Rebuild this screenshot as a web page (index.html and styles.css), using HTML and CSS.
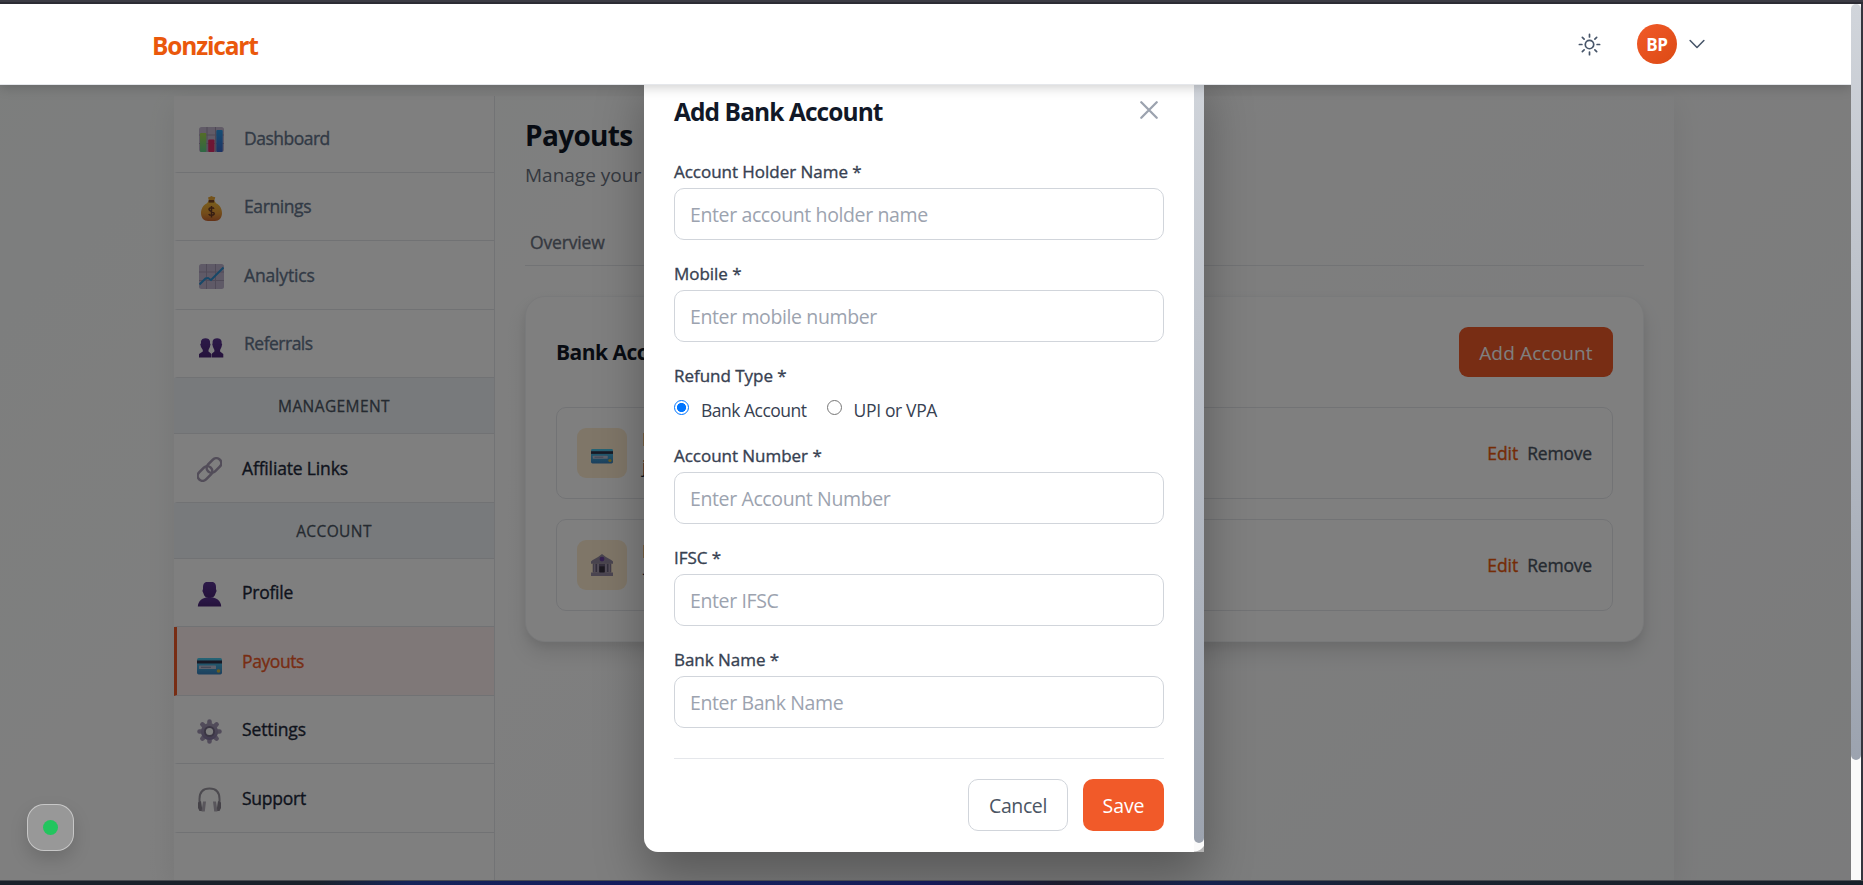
FILE: index.html
```html
<!DOCTYPE html>
<html lang="en">
<head>
<meta charset="utf-8">
<title>Bonzicart - Payouts</title>
<link rel="stylesheet" href="styles.css">
</head>
<body>
<div class="frame">
  <div class="frame-top"></div>
  <div class="viewport">
    <div class="page">
      <header class="topbar">
        <a class="brand"><span class="t">Bonzicart</span></a>
        <div class="topbar-actions">
          <svg class="sun" viewBox="0 0 24 24"><path d="M12 3v2.25m6.364.386-1.591 1.591M21 12h-2.25m-.386 6.364-1.591-1.591M12 18.75V21m-4.773-4.227-1.591 1.591M5.25 12H3m4.227-4.773L5.636 5.636M15.750 12a3.750 3.750 0 1 1-7.500 0 3.750 3.750 0 0 1 7.500 0Z"/></svg>
          <span class="avatar"><span class="t">BP</span></span>
          <svg class="chevron" viewBox="0 0 24 24"><path d="m19.500 8.250-7.500 7.500-7.500-7.500"/></svg>
        </div>
      </header>

      <div class="body">
        <div class="shell">
          <nav class="sidebar">
            <a class="nav-item muted first">
              <svg class="emoji" viewBox="0 0 25 25"><use href="#e-bars"/></svg><span class="t n1">Dashboard</span></a>
            <a class="nav-item muted">
              <svg class="emoji" viewBox="0 0 25 25"><use href="#e-bag"/></svg><span class="t n2">Earnings</span></a>
            <a class="nav-item muted tall">
              <svg class="emoji" viewBox="0 0 25 25"><use href="#e-trend"/></svg><span class="t n3">Analytics</span></a>
            <a class="nav-item muted">
              <svg class="emoji" viewBox="0 0 25 25"><use href="#e-people"/></svg><span class="t n4">Referrals</span></a>
            <div class="nav-head"><span class="t">MANAGEMENT</span></div>
            <a class="nav-item tall">
              <svg class="emoji" viewBox="0 0 25 25"><use href="#e-link"/></svg><span class="t n5">Affiliate Links</span></a>
            <div class="nav-head"><span class="t">ACCOUNT</span></div>
            <a class="nav-item">
              <svg class="emoji" viewBox="0 0 25 25"><use href="#e-person"/></svg><span class="t n6">Profile</span></a>
            <a class="nav-item tall active">
              <svg class="emoji" viewBox="0 0 25 25"><use href="#e-card"/></svg><span class="t n7">Payouts</span></a>
            <a class="nav-item">
              <svg class="emoji" viewBox="0 0 25 25"><use href="#e-gear"/></svg><span class="t n8">Settings</span></a>
            <a class="nav-item tall">
              <svg class="emoji" viewBox="0 0 25 25"><use href="#e-phones"/></svg><span class="t n9">Support</span></a>
          </nav>

          <main class="content">
            <h1 class="title"><span class="t">Payouts</span></h1>
            <p class="subtitle"><span class="t">Manage your</span></p>
            <div class="tabs"><span class="t">Overview</span></div>
            <section class="card">
              <div class="card-head">
                <h2 class="card-title"><span class="t">Bank Accounts</span></h2>
                <button class="add"><span class="t">Add Account</span></button>
              </div>
              <div class="account">
                <span class="tile"><svg class="tile-icon" viewBox="0 0 25 25"><use href="#e-card"/></svg></span>
                <div class="account-text"><b>B</b><i>j</i></div>
                <div class="account-actions"><a class="edit"><span class="t">Edit</span></a><a class="remove"><span class="t">Remove</span></a></div>
              </div>
              <div class="account">
                <span class="tile"><svg class="tile-icon" viewBox="0 0 25 25"><use href="#e-bank"/></svg></span>
                <div class="account-text"><b>B</b><i>*</i></div>
                <div class="account-actions"><a class="edit"><span class="t">Edit</span></a><a class="remove"><span class="t">Remove</span></a></div>
              </div>
            </section>
          </main>
        </div>
      </div>

      <div class="overlay">
        <div class="modal">
          <form class="modal-body">
            <div class="modal-head">
              <h3 class="modal-title"><span class="t">Add Bank Account</span></h3>
              <svg class="close" viewBox="0 0 18 18"><path d="M1.300 1.300 16.700 16.700M16.700 1.300 1.300 16.700"/></svg>
            </div>
            <div class="field"><label><span class="t">Account Holder Name *</span></label><div class="input"><span class="t">Enter account holder name</span></div></div>
            <div class="field"><label><span class="t">Mobile *</span></label><div class="input"><span class="t">Enter mobile number</span></div></div>
            <div class="field"><label><span class="t">Refund Type *</span></label>
              <div class="radios">
                <span class="radio on"></span><span class="t r1">Bank Account</span>
                <span class="radio second"></span><span class="t r2">UPI or VPA</span>
              </div>
            </div>
            <div class="field"><label><span class="t">Account Number *</span></label><div class="input"><span class="t">Enter Account Number</span></div></div>
            <div class="field"><label><span class="t">IFSC *</span></label><div class="input"><span class="t">Enter IFSC</span></div></div>
            <div class="field"><label><span class="t">Bank Name *</span></label><div class="input"><span class="t">Enter Bank Name</span></div></div>
            <div class="modal-foot">
              <button type="button" class="btn cancel"><span class="t">Cancel</span></button>
              <button type="button" class="btn save"><span class="t">Save</span></button>
            </div>
          </form>
          <div class="modal-scroll"><div class="modal-thumb"></div></div>
        </div>
      </div>
      <div class="status"><span class="status-dot"></span></div>
    </div>
    <div class="scrollbar"><div class="thumb"></div></div>
    <div class="edge"></div>
  </div>
  <div class="frame-bottom"></div>
</div>

<svg class="defs" width="0" height="0">
  <defs>
    <linearGradient id="g-green" x1="0" y1="0" x2="0" y2="1"><stop offset="0" stop-color="#a8d94e"/><stop offset="1" stop-color="#5cd08a"/></linearGradient>
    <linearGradient id="g-blue" x1="0" y1="0" x2="0" y2="1"><stop offset="0" stop-color="#2b9be8"/><stop offset="1" stop-color="#3a66c8"/></linearGradient>
    <linearGradient id="g-bag" x1="0" y1="0" x2="0" y2="1"><stop offset="0" stop-color="#f4bd3a"/><stop offset=".6" stop-color="#e89a34"/><stop offset="1" stop-color="#c9652f"/></linearGradient>
    <linearGradient id="g-purple" x1="0" y1="0" x2="0" y2="1"><stop offset="0" stop-color="#5a3492"/><stop offset="1" stop-color="#4a2577"/></linearGradient>
    <linearGradient id="g-card" x1="0" y1="0" x2="0" y2="1"><stop offset="0" stop-color="#4cc8ea"/><stop offset="1" stop-color="#3a80bc"/></linearGradient>
    <linearGradient id="g-gear" x1="0" y1="0" x2="0" y2="1"><stop offset="0" stop-color="#a79db6"/><stop offset="1" stop-color="#8274a0"/></linearGradient>
    <symbol id="e-bars" viewBox="0 0 25 25">
      <rect width="25" height="25" rx="2.500" fill="#c3b7cf"/>
      <path d="M8 0v25M16.500 0v25M0 8h25M0 16.500h25" stroke="#9d91ab" stroke-width="1"/>
      <rect x="1" y="6" width="6.300" height="19" rx="1" fill="url(#g-green)"/>
      <rect x="9.200" y="12.500" width="6.300" height="12.500" rx="1" fill="#dc2c69"/>
      <rect x="17.300" y="3" width="6.400" height="22" rx="1" fill="url(#g-blue)"/>
    </symbol>
    <symbol id="e-bag" viewBox="0 0 25 25">
      <path d="M9 1.500 11 .8l1.500-.8 1.500.8 2.300.5-1.200 4h-5z" fill="#e8a636"/>
      <path d="M9.500 5h6l1.600 2.200C21 9 23 13 23 17c0 5-3 8-7 8H9c-4 0-7-3-7-8 0-4 2-8 6-9.800z" fill="url(#g-bag)"/>
      <rect x="9.600" y="4" width="5.600" height="2.600" fill="#7d4420"/>
      <path d="M15 12.800c-.6-1.300-5-1.600-5 .7 0 2.500 5.200 1.400 5.200 4.100 0 2.400-4.800 2.200-5.400.3M12.500 10v11.500" fill="none" stroke="#6b3a24" stroke-width="1.500"/>
    </symbol>
    <symbol id="e-trend" viewBox="0 0 25 25">
      <rect width="25" height="25" rx="2.500" fill="#bfb4ce"/>
      <path d="M7.500 0v25M16.500 0v25M0 8h25M0 16.500h25" stroke="#a196b1" stroke-width="1"/>
      <path d="m.5 20.500 6-6 2.500-.5 3 2L24.500 3.500" fill="none" stroke="#2f90d0" stroke-width="2"/>
    </symbol>
    <symbol id="e-people" viewBox="0 0 25 25">
      <g transform="translate(0 1.500)" fill="url(#g-purple)">
        <path d="M2 7c0-4.500 9-4.500 9 0v2l.6.500-.7 3-1.400 3v1.500l3 2.500V23H0v-3.500L3.800 17v-1.500L2 12.500 1.200 9.500 2 9z"/>
        <path d="M13.600 7c0-4.500 9-4.500 9 0v2l.6.500-.7 3-1.400 3V17l3.200 2.500V23H13v-4l2.400-2v-1.500l-1.400-3-.8-3 .4-.5z"/>
      </g>
    </symbol>
    <symbol id="e-link" viewBox="0 0 25 25">
      <g fill="none" stroke="#a59ab2" stroke-width="2.600"><rect x="8.700" y="3.600" width="16.500" height="9.800" rx="4.900" transform="rotate(-45 17 8.500)"/><rect x="-.3" y="11.600" width="16.500" height="9.800" rx="4.900" transform="rotate(-45 8 16.500)"/></g>
    </symbol>
    <symbol id="e-person" viewBox="0 0 25 25">
      <path d="M9 0h7q3 1 3 5v2l.6 2-.9 2c-1 4-3 5-6.200 5s-5.200-1-6.200-5L5.400 9 6 7V5q0-4 3-5z" fill="url(#g-purple)"/>
      <path d="M.8 24.500C1 19 5 16.500 9 15.500h7c4 1 8 3.500 8.200 9z" fill="url(#g-purple)"/>
    </symbol>
    <symbol id="e-card" viewBox="0 0 25 25">
      <rect y="8" width="25" height="16.500" rx="1.700" fill="url(#g-card)"/>
      <rect y="10.500" width="25" height="3" fill="#33334a"/>
      <rect x="2" y="15.500" width="17" height="3.600" rx=".6" fill="#bcc2d8"/><path d="M4 17.300h10" stroke="#7f86a5" stroke-width="1"/>
      <circle cx="21.500" cy="21" r="1.800" fill="#d0b840"/>
    </symbol>
    <symbol id="e-gear" viewBox="0 0 25 25">
      <g stroke="#a397b5" stroke-width="4.600" stroke-linecap="round"><path d="M12.500 2.500v20M2.500 12.500h20M5.400 5.400l14.200 14.200M19.600 5.400 5.400 19.600"/></g>
      <circle cx="12.500" cy="12.500" r="8.600" fill="url(#g-gear)"/><circle cx="12.500" cy="12.500" r="5.500" fill="#766c88"/><circle cx="12.500" cy="12.500" r="3.600" fill="#fff"/>
    </symbol>
    <symbol id="e-phones" viewBox="0 0 25 25">
      <path d="M2.500 16v-4C2.500 4.500 7 1.500 12.500 1.500s10 3 10 10.500v4" fill="none" stroke="#9a96a0" stroke-width="2"/>
      <path d="M1 15.500 4 14l1.500 10H2.500L1 21zM24 15.500 21 14l-1.500 10h3L24 21z" fill="#8a8590"/>
      <path d="M6 14.500h3L7.800 24.500H4.500zM19 14.500h-3l1.200 10h3.300z" fill="#b2adb8"/>
    </symbol>
    <symbol id="e-bank" viewBox="0 0 25 25">
      <path d="M12.500 0 17 3.500 23.500 7 25 8.500V11H0V8.500L1.500 7 8 3.500z" fill="#93889f"/>
      <path d="M2 11h21v10H2z" fill="#695f79"/><path d="M4 11v10M8 11v10M17 11v10M21 11v10" stroke="#a69bb1" stroke-width="2.200"/>
      <path d="M9.500 14h6v8h-6z" fill="#37303f"/><circle cx="12.500" cy="5.800" r="2.800" fill="#6a43a0"/>
      <path d="M0 21h25v4H0z" fill="#968aa3"/>
    </symbol>
  </defs>
</svg>
</body>
</html>
```
FILE: styles.css
```css
* { box-sizing: border-box; }
html, body { margin: 0; height: 100%; overflow: hidden; }
body { font-family: "Open Sans", "Noto Sans", sans-serif; color: #1e293b; }
h1, h2, h3, p { margin: 0; }
button { font: inherit; border: 0; padding: 0; }
.t { white-space: nowrap; display: inline-block; }
.defs { position: absolute; }

.frame { width: 1863px; height: 885px; display: flex; flex-direction: column; background: #303038; }
.frame-top { height: 4px; background: linear-gradient(#3b3b44 50%, #2c2c34 50%); }
.frame-bottom { height: 5px; border-top: 1px solid #4a4d52; background: linear-gradient(90deg, #1a212b 0, #1a212b 17%, #15245a 22%, #141b5c 34%, #15205a 44%, #151a58 50%, #1c1b2c 57%, #15224e 65%, #1a222f 75%, #18202a 100%); }
.viewport { height: 876px; display: flex; }
.page { position: relative; width: 1851px; height: 876px; display: flex; flex-direction: column; overflow: hidden; background: linear-gradient(135deg, #f9fcfb, #ffffff 35%, #f6f7f8); }
.scrollbar { width: 10px; background: #fafafa; }
.thumb { height: 756px; border-radius: 5px; background: linear-gradient(#d1d5db, #9ca3af); }
.edge { width: 2px; background: #35353e; }

/* Header */
.topbar { position: relative; z-index: 5; flex: none; height: 81px; padding: 0 143px 0 152px; display: flex; align-items: center; justify-content: space-between; background: #fff; border-bottom: 1px solid #e5e7eb; box-shadow: 0 2px 12px rgba(0, 0, 0, .2); }
.brand { padding-top: 2px; font-size: 24.5px; font-weight: 700; color: #ea580c; letter-spacing: -1.170px; }
.topbar-actions { display: flex; align-items: center; }
.sun { width: 27px; height: 27px; fill: none; stroke: #475569; stroke-width: 1.5; stroke-linecap: round; }
.avatar { width: 40px; height: 40px; margin-left: 34px; border-radius: 50%; display: flex; align-items: center; justify-content: center; font-size: 17px; font-weight: 700; letter-spacing: -.4px; color: #fff; background: linear-gradient(135deg, #f15a29, #dc4a14); }
.chevron { width: 22px; height: 22px; margin-left: 9px; fill: none; stroke: #475569; stroke-width: 1.7; stroke-linecap: round; stroke-linejoin: round; }

/* Sidebar */
.body { flex: 1; padding: 11px 0 0 174px; display: flex; }
.shell { width: 1500px; display: flex; box-shadow: 0 8px 28px rgba(0, 0, 0, .08); }
.sidebar { width: 321px; flex: none; border-right: 1px solid #e5e7eb; background: #fff; }
.nav-item { height: 68px; padding: 0 0 1px 20px; display: flex; align-items: center; gap: 20px; border-left: 3px solid transparent; border-bottom: 1px solid #e2e5e9; font-size: 17.5px; -webkit-text-stroke: .35px; color: #1e293b; }
.nav-item.tall { height: 69px; }
.nav-item.first { height: 77px; padding-top: 8px; }
.nav-item.muted { padding-left: 22px; color: #64748b; }
.nav-item.active { background: #fff1f0; border-left-color: #f15a29; color: #f15a29; }
.emoji { width: 25px; height: 25px; flex: none; position: relative; top: 2px; }
.emoji, .tile-icon { -webkit-text-stroke: 0; }
.nav-head { height: 56px; display: flex; align-items: center; justify-content: center; background: #f1f5f9; border-bottom: 1px solid #e2e5e9; font-size: 15.5px; -webkit-text-stroke: .3px; color: #4b5563; letter-spacing: .4px; }
.n1, .n4 { letter-spacing: -.5px; }
.n2, .n7 { letter-spacing: -.4px; }
.n3, .n5 { letter-spacing: -.16px; }
.n6, .n9 { letter-spacing: -.25px; }
.n8 { letter-spacing: -.12px; }

/* Payouts content */
.content { flex: 1; padding: 21px 30px 0; }
.title { height: 42px; line-height: 37px; font-size: 28px; font-weight: 700; letter-spacing: -.68px; color: #111827; }
.subtitle { height: 34px; line-height: 32px; font-size: 19px; color: #6b7280; }
.tabs { height: 73px; padding: 33px 5px 0; border-bottom: 1px solid #e5e7eb; font-size: 17.5px; line-height: 32px; -webkit-text-stroke: .35px; letter-spacing: -.15px; color: #6b7280; }
.card { margin-top: 30px; height: 346px; padding: 30px; display: flex; flex-direction: column; gap: 20px; border: 1px solid #f3f4f6; border-radius: 20px; background: #fff; box-shadow: 0 12px 20px rgba(0, 0, 0, .1), 0 4px 8px rgba(0, 0, 0, .06); }
.card-head { flex: none; height: 50px; margin-bottom: 10px; display: flex; justify-content: space-between; align-items: center; }
.card-title { font-size: 21px; font-weight: 700; letter-spacing: -.5px; color: #111827; }
.add { width: 154px; height: 50px; padding-top: 2px; border-radius: 9px; background: #f15a29; color: #fff; font-size: 19px; letter-spacing: .15px; }
.account { flex: none; height: 92px; padding: 0 20px; display: flex; align-items: center; border: 1px solid #e5e7eb; border-radius: 10px; }
.tile { width: 50px; height: 50px; display: flex; align-items: center; justify-content: center; border-radius: 9px; background: #ffedd0; }
.tile-icon { width: 22px; height: 22px; }
.account-text { flex: 1; margin-left: 15px; display: flex; flex-direction: column; line-height: 27px; font-size: 18px; }
.account-text b { font-weight: 500; }
.account-text i { font-style: normal; }
.account-actions { display: flex; gap: 9px; font-size: 17.5px; -webkit-text-stroke: .35px; }
.edit { color: #ea580c; }
.remove { color: #4b5563; letter-spacing: -.2px; }

/* Modal */
.overlay { position: absolute; inset: 0; z-index: 3; background: rgba(0, 0, 0, .5); }
.modal { position: absolute; left: 644px; top: 60px; width: 560px; height: 788px; display: flex; background: #fff; border-radius: 14px 0 0 14px; box-shadow: 0 25px 50px rgba(0, 0, 0, .3); }
.modal-body { width: 550px; padding: 21px 30px 0; }
.modal-head { height: 75px; display: flex; justify-content: space-between; }
.modal-title { line-height: 54px; font-size: 24.5px; font-weight: 700; letter-spacing: -.92px; color: #111827; }
.close { width: 18px; height: 18px; margin: 16px 6px 0 0; fill: none; stroke: #9ca3af; stroke-width: 2.3; stroke-linecap: round; }
.field { margin-bottom: 22px; }
.field label { display: block; height: 24px; line-height: 23px; margin-bottom: 4px; font-size: 17px; -webkit-text-stroke: .35px; letter-spacing: -.03px; color: #374151; }
.input { height: 52px; padding-left: 15px; display: flex; align-items: center; border: 1px solid #d1d5db; border-radius: 10px; font-size: 19.5px; letter-spacing: -.38px; color: #9ca3af; }
.radios { height: 30px; padding-top: 5px; display: flex; align-items: center; font-size: 17.5px; color: #374151; }
.radio { width: 15px; height: 15px; margin: 0 12px 4px 0; border: 1.5px solid #767676; border-radius: 50%; }
.radio.on { border-color: #0075ff; background: radial-gradient(circle, #0075ff 4.3px, #fff 4.8px); }
.radio.second { margin-left: 20px; }
.r1 { letter-spacing: -.5px; }
.r2 { letter-spacing: -.35px; }
.modal-foot { margin-top: 30px; padding-top: 20px; border-top: 1px solid #e5e7eb; display: flex; justify-content: flex-end; gap: 15px; }
.btn { height: 52px; border-radius: 10px; font-size: 19.5px; }
.cancel { width: 100px; border: 1px solid #d1d5db; background: #fff; color: #4b5563; letter-spacing: -.4px; }
.save { width: 81px; background: #f15a29; color: #fff; letter-spacing: -.1px; }
.modal-scroll { width: 10px; background: radial-gradient(circle at 0 776px, #fafafa 11px, #b4b4b4 12px); }
.modal-thumb { height: 779px; border-radius: 5px; background: linear-gradient(#d1d5db, #9ca3af); }

.status { position: absolute; z-index: 6; left: 27px; top: 800px; width: 47px; height: 47px; display: flex; align-items: center; justify-content: center; border: 1px solid rgba(255, 255, 255, .45); border-radius: 17px; background: rgba(255, 255, 255, .2); box-shadow: 0 8px 18px rgba(0, 0, 0, .15); }
.status-dot { width: 15px; height: 15px; border-radius: 50%; background: #22c55e; }
```
